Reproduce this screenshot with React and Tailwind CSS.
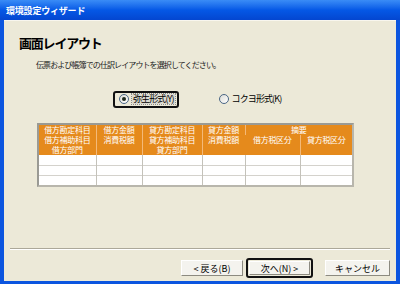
import React, { useState } from 'react';

const JP = { fontFamily: '"MS UI Gothic", "Noto Sans CJK JP", "Noto Sans", sans-serif' };

const Radio = ({ checked }) => (
  <span className="w-[10px] h-[10px] rounded-full border border-[#4A6685] bg-linear-to-br from-[#DCDCD6] to-white flex items-center justify-center shrink-0">
    {checked && <span className="w-[4px] h-[4px] rounded-full bg-[#1E2A1E]" />}
  </span>
);

const Button = ({ children, focused }) => {
  const inner = (
    <div className="h-full flex items-center justify-center bg-[#F4F3EE] border border-t-white border-l-white border-r-[#8C8A80] border-b-[#8C8A80] text-[9px] leading-[9px] text-black whitespace-nowrap">
      {children}
    </div>
  );
  if (focused) {
    return (
      <div className="w-[67px] h-[20px] -mt-[2px] rounded-[3px] border-2 border-[#111] p-[1px]">
        {inner}
      </div>
    );
  }
  return <div className="h-[16px]">{inner}</div>;
};

/**
 * 環境設定ウィザード - 画面レイアウト
 */
const App = () => {
  const [layout, setLayout] = useState('yayoi');

  const head = 'align-top text-center font-normal border-l border-[#F4B978] first:border-l-0';

  return (
    <div className="w-[400px] h-[284px] flex flex-col bg-[#0B55DF] overflow-hidden select-none" style={JP}>
      {/* タイトルバー */}
      <div className="h-[20px] shrink-0 flex items-center px-[6px] bg-linear-to-b from-[#3A8CF6] via-[#0558E6] to-[#0446D0]">
        <span className="text-white font-bold text-[9px] leading-[9px] tracking-[-0.2px]">環境設定ウィザード</span>
      </div>

      <div className="flex-1 mx-[4px] mb-[3px] bg-[#ECE9D8] border-t border-[#F8F6EE] flex flex-col">
        {/* 見出し */}
        <div className="pl-[15px] pt-[15px]">
          <h1 className="text-[13px] leading-[13px] font-bold tracking-[-1.2px] text-black">画面レイアウト</h1>
        </div>
        <p className="mt-[11px] pl-[32px] text-[8px] leading-[9px] tracking-[-0.9px] text-[#222]">
          伝票および帳簿での仕訳レイアウトを選択してください。
        </p>

        {/* レイアウト選択 */}
        <div className="mt-[22px] h-[16px] flex items-center">
          <button
            onClick={() => setLayout('yayoi')}
            className="ml-[109px] h-[17px] rounded-[3px] border-2 border-[#111] flex items-center gap-[3px] pl-[4px] pr-[2px] whitespace-nowrap"
          >
            <Radio checked={layout === 'yayoi'} />
            <span className="text-[9px] leading-[10px] tracking-[-0.9px] text-black outline-1 outline-dotted outline-[#8A8A8A] bg-[#DCDAD0] px-[1px]">弥生形式(Y)</span>
          </button>
          <button
            onClick={() => setLayout('kokuyo')}
            className="ml-[40px] flex items-center gap-[3px] whitespace-nowrap"
          >
            <Radio checked={layout === 'kokuyo'} />
            <span className="text-[9px] leading-[10px] tracking-[-0.9px] text-black">コクヨ形式(K)</span>
          </button>
        </div>

        {/* レイアウトプレビュー */}
        <div className="mt-[16px] ml-[33px] w-[317px] border-2 border-t-[#9A9A94] border-l-[#9A9A94] border-r-[#B8B6AC] border-b-[#B8B6AC] bg-white">
          <table className="w-[313px] table-fixed border-collapse text-white text-[8px] leading-[10px] tracking-[-0.3px]">
            <colgroup>
              <col className="w-[57px]" />
              <col className="w-[46px]" />
              <col className="w-[60px]" />
              <col className="w-[43px]" />
              <col className="w-[55px]" />
              <col className="w-[52px]" />
            </colgroup>
            <thead className="bg-[#E58A1C]">
              <tr>
                <th rowSpan={2} className={head}>
                  <div>借方勘定科目</div>
                  <div>借方補助科目</div>
                  <div>借方部門</div>
                </th>
                <th rowSpan={2} className={head}>
                  <div>借方金額</div>
                  <div>消費税額</div>
                </th>
                <th rowSpan={2} className={head}>
                  <div>貸方勘定科目</div>
                  <div>貸方補助科目</div>
                  <div>貸方部門</div>
                </th>
                <th rowSpan={2} className={head}>
                  <div>貸方金額</div>
                  <div>消費税額</div>
                </th>
                <th colSpan={2} className={head + ' h-[10px]'}>摘要</th>
              </tr>
              <tr>
                <th className={head + ' h-[20px]'}>借方税区分</th>
                <th className={head}>貸方税区分</th>
              </tr>
            </thead>
            <tbody>
              {[0, 1, 2].map((r) => (
                <tr key={r} className="h-[10px] border-t border-[#D4D2CC] first:border-t-0">
                  {[0, 1, 2, 3, 4, 5].map((c) => (
                    <td key={c} className="border-l border-[#C4C2BA] first:border-l-0" />
                  ))}
                </tr>
              ))}
            </tbody>
          </table>
        </div>

        <div className="flex-1" />

        {/* 区切り線 */}
        <div className="mx-[6px] border-t border-[#ACA899] border-b border-b-white" />

        {/* ボタン */}
        <div className="mt-[10px] mb-[5px] flex justify-end pr-[6px] h-[16px]">
          <div className="w-[62px]">
            <Button>&lt; 戻る(B)</Button>
          </div>
          <div className="ml-[3px]">
            <Button focused>次へ(N) &gt;</Button>
          </div>
          <div className="ml-[12px] w-[65px]">
            <Button>キャンセル</Button>
          </div>
        </div>
      </div>
    </div>
  );
};

export default App;
